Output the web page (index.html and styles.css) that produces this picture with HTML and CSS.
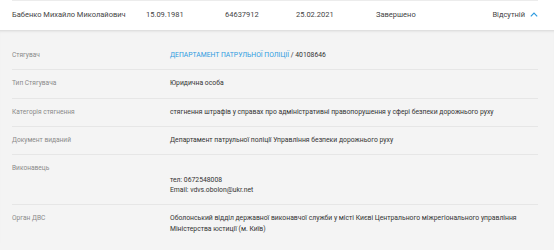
FILE: index.html
```html
<!DOCTYPE html>
<html lang="uk">
<head>
<meta charset="utf-8">
<link rel="stylesheet" href="styles.css">
</head>
<body>
<div class="table">
  <div class="row-main">
    <div class="cell">Бабенко Михайло Миколайович</div>
    <div class="cell">15.09.1981</div>
    <div class="cell">64637912</div>
    <div class="cell">25.02.2021</div>
    <div class="cell">Завершено</div>
    <div class="cell cell-right">Відсутній
      <svg class="chev" width="8" height="5" viewBox="0 0 8 5"><path d="M0.8 4.3 L4 1.1 L7.2 4.3" fill="none" stroke="#2d9be0" stroke-width="1.2"/></svg>
    </div>
  </div>
  <div class="details">
    <div class="drow">
      <div class="dlabel">Стягувач</div>
      <div class="dvalue"><span class="link">ДЕПАРТАМЕНТ ПАТРУЛЬНОЇ ПОЛІЦІЇ</span> / 40108646</div>
    </div>
    <div class="drow">
      <div class="dlabel">Тип Стягувача</div>
      <div class="dvalue">Юридична особа</div>
    </div>
    <div class="drow">
      <div class="dlabel">Категорія стягнення</div>
      <div class="dvalue">стягнення штрафів у справах про адміністративні правопорушення у сфері безпеки дорожнього руху</div>
    </div>
    <div class="drow">
      <div class="dlabel">Документ виданий</div>
      <div class="dvalue">Департамент патрульної поліції Управління безпеки дорожнього руху</div>
    </div>
    <div class="drow">
      <div class="dlabel">Виконавець</div>
      <div class="dvalue contacts">
        <div class="contact">тел: 0672548008</div>
        <div class="contact">Email: vdvs.obolon@ukr.net</div>
      </div>
    </div>
    <div class="drow last">
      <div class="dlabel">Орган ДВС</div>
      <div class="dvalue">Оболонський відділ державної виконавчої служби у місті Києві Центрального міжрегіонального управління<br>Міністерства юстиції (м. Київ)</div>
    </div>
  </div>
</div>
</body>
</html>
```
FILE: styles.css
```css
html, body {
  margin: 0;
  padding: 0;
  background: #f4f4f4;
  font-family: Roboto, "Noto Sans", sans-serif;
  -webkit-font-smoothing: antialiased;
}
.table {
  width: 554px;
}
.row-main {
  background: #fff;
  display: grid;
  grid-template-columns: 134px 79px 71px 80px 1fr auto;
  padding: 0 16px 0 12px;
}
.row-main::before {
  content: "";
  grid-column: 1 / -1;
  height: 1px;
  background: #ececec;
}
.cell {
  font-size: 7.5px;
  line-height: 11px;
  color: #444;
  padding: 8px 0 10px;
}
.cell-right {
  display: flex;
  align-items: center;
  gap: 5px;
}
.chev {
  display: block;
}
.details {
  background: #f4f4f4;
  box-shadow: inset 0 3px 3px -2px rgba(0,0,0,0.12);
  padding: 12px 16px 0 12px;
}
.drow {
  display: grid;
  grid-template-columns: 158px 1fr;
  padding: 8px 0;
  border-bottom: 1px solid #e6e6e6;
  line-height: 11.33px;
}
.drow.last {
  border-bottom: none;
}
.dlabel {
  color: #8a8a8a;
  font-size: 6.6px;
}
.dvalue {
  color: #333;
  font-size: 6.8px;
}
.link {
  color: #2d9be0;
}
.contacts {
  padding-top: 13px;
  line-height: 9.7px;
}
```
